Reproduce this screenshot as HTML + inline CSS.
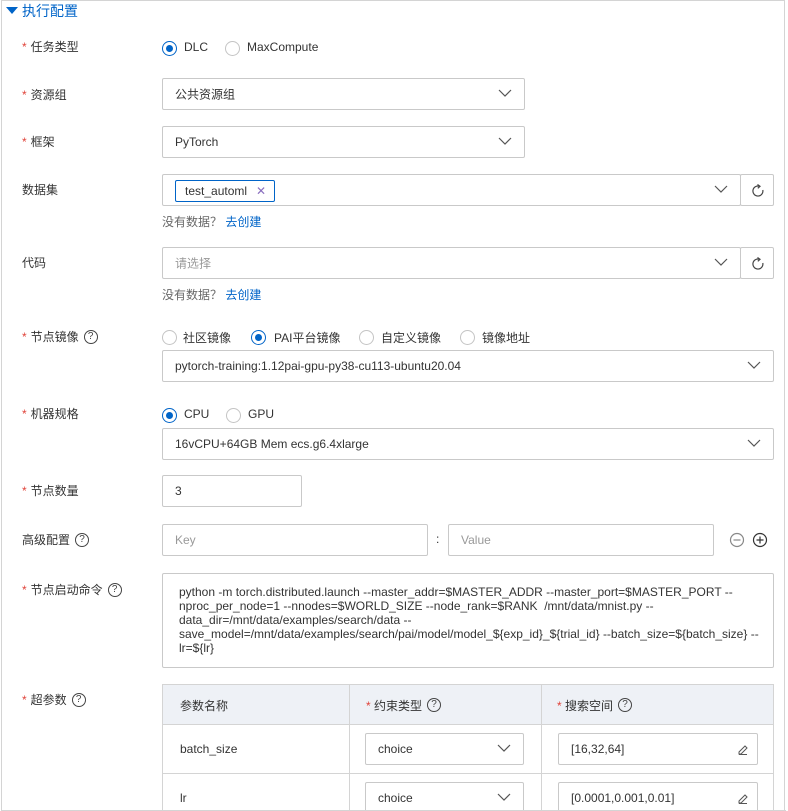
<!DOCTYPE html>
<html><head><meta charset="utf-8"><style>
*{box-sizing:border-box;margin:0;padding:0}
body{width:788px;height:811px;background:#fff;position:relative;overflow:hidden;font-family:"Liberation Sans","Noto Sans CJK SC",sans-serif;font-size:12px;color:#333}
.a{position:absolute;white-space:nowrap}
.frame{position:absolute;left:1px;top:0;width:784px;height:811px;border:1px solid #d4d4d4}
.lbl{position:absolute;left:22px;line-height:16px}
.lbl i{font-style:normal;color:#e0433a;margin-right:4px}
.box{position:absolute;border:1px solid #c9c9c9;border-radius:2px;background:#fff}
.tx{position:absolute;left:12px;top:50%;transform:translateY(-50%);white-space:nowrap}
.ph{color:#999}
.rad{position:absolute;width:15px;height:15px;border:1px solid #c4c4c4;border-radius:50%;background:#fff}
.rad.on{border-color:#0064c8}
.rad.on:after{content:"";position:absolute;left:3px;top:3px;width:7px;height:7px;border-radius:50%;background:#0064c8}
.q{display:inline-block;width:14px;height:14px;border:1.2px solid #444;border-radius:50%;font-size:10px;line-height:12px;text-align:center;color:#444;vertical-align:top;margin-top:1px;margin-left:5px}
.arrow{position:absolute;right:12px;top:50%;margin-top:-6px;width:14px;height:10px}
.link{color:#0064c8}
.hint{color:#666}
</style></head><body>
<div class="frame"></div>
<svg class="a" style="left:5px;top:5px" width="14" height="10"><path d="M1 2 L13 2 L7 9Z" fill="#0064c8"/></svg>
<div class="a" style="left:22px;top:2px;font-size:14px;color:#0064c8;line-height:18px">执行配置</div>

<div class="lbl" style="top:39px"><i>*</i>任务类型</div>
<div class="rad on" style="left:162px;top:41px"></div><div class="a" style="left:184px;top:40px">DLC</div>
<div class="rad" style="left:225px;top:41px"></div><div class="a" style="left:247px;top:40px">MaxCompute</div>

<div class="lbl" style="top:87px"><i>*</i>资源组</div>
<div class="box" style="left:162px;top:78px;width:363px;height:32px"><span class="tx">公共资源组</span><svg class="arrow" viewBox="0 0 14 10"><path d="M1 2 L7 8 L13 2" fill="none" stroke="#555" stroke-width="1.2"/></svg></div>

<div class="lbl" style="top:134px"><i>*</i>框架</div>
<div class="box" style="left:162px;top:126px;width:363px;height:32px"><span class="tx">PyTorch</span><svg class="arrow" viewBox="0 0 14 10"><path d="M1 2 L7 8 L13 2" fill="none" stroke="#555" stroke-width="1.2"/></svg></div>

<div class="lbl" style="top:182px">数据集</div>
<div class="box" style="left:162px;top:174px;width:579px;height:32px"><div class="a" style="left:12px;top:5px;width:100px;height:22px;border:1px solid #0064c8;border-radius:2px;line-height:20px;padding-left:9px">test_automl<span style="position:absolute;left:80px;color:#8a6fbf">✕</span></div><svg class="arrow" viewBox="0 0 14 10"><path d="M1 2 L7 8 L13 2" fill="none" stroke="#555" stroke-width="1.2"/></svg></div>
<div class="box" style="left:740px;top:174px;width:34px;height:32px"><svg class="a" style="left:10px;top:9px" width="14" height="14" viewBox="0 0 14 14"><path d="M8.5 2.3 A5 5 0 1 0 11.8 6" fill="none" stroke="#444" stroke-width="1.2"/><path d="M6.5 0.5 L9 2.3 L6.8 4.3" fill="none" stroke="#444" stroke-width="1.2"/></svg></div>
<div class="a hint" style="left:162px;top:213px">没有数据？ <span class="link">去创建</span></div>

<div class="lbl" style="top:255px">代码</div>
<div class="box" style="left:162px;top:247px;width:579px;height:32px"><span class="tx ph">请选择</span><svg class="arrow" viewBox="0 0 14 10"><path d="M1 2 L7 8 L13 2" fill="none" stroke="#555" stroke-width="1.2"/></svg></div>
<div class="box" style="left:740px;top:247px;width:34px;height:32px"><svg class="a" style="left:10px;top:9px" width="14" height="14" viewBox="0 0 14 14"><path d="M8.5 2.3 A5 5 0 1 0 11.8 6" fill="none" stroke="#444" stroke-width="1.2"/><path d="M6.5 0.5 L9 2.3 L6.8 4.3" fill="none" stroke="#444" stroke-width="1.2"/></svg></div>
<div class="a hint" style="left:162px;top:286px">没有数据？ <span class="link">去创建</span></div>

<div class="lbl" style="top:329px"><i>*</i>节点镜像<span class="q">?</span></div>
<div class="rad" style="left:162px;top:330px"></div><div class="a" style="left:183px;top:329px">社区镜像</div>
<div class="rad on" style="left:251px;top:330px"></div><div class="a" style="left:274px;top:329px">PAI平台镜像</div>
<div class="rad" style="left:359px;top:330px"></div><div class="a" style="left:381px;top:329px">自定义镜像</div>
<div class="rad" style="left:460px;top:330px"></div><div class="a" style="left:482px;top:329px">镜像地址</div>
<div class="box" style="left:162px;top:350px;width:612px;height:32px"><span class="tx">pytorch-training:1.12pai-gpu-py38-cu113-ubuntu20.04</span><svg class="arrow" viewBox="0 0 14 10"><path d="M1 2 L7 8 L13 2" fill="none" stroke="#555" stroke-width="1.2"/></svg></div>

<div class="lbl" style="top:406px"><i>*</i>机器规格</div>
<div class="rad on" style="left:162px;top:408px"></div><div class="a" style="left:184px;top:407px">CPU</div>
<div class="rad" style="left:226px;top:408px"></div><div class="a" style="left:248px;top:407px">GPU</div>
<div class="box" style="left:162px;top:428px;width:612px;height:32px"><span class="tx">16vCPU+64GB Mem ecs.g6.4xlarge</span><svg class="arrow" viewBox="0 0 14 10"><path d="M1 2 L7 8 L13 2" fill="none" stroke="#555" stroke-width="1.2"/></svg></div>

<div class="lbl" style="top:483px"><i>*</i>节点数量</div>
<div class="box" style="left:162px;top:475px;width:140px;height:32px"><span class="tx">3</span></div>

<div class="lbl" style="top:532px">高级配置<span class="q">?</span></div>
<div class="box" style="left:162px;top:524px;width:266px;height:32px"><span class="tx ph">Key</span></div>
<div class="a" style="left:436px;top:532px">:</div>
<div class="box" style="left:448px;top:524px;width:266px;height:32px"><span class="tx ph">Value</span></div>
<svg class="a" style="left:729px;top:532px" width="16" height="16"><circle cx="8" cy="8" r="6.5" fill="none" stroke="#888" stroke-width="1.2"/><path d="M4.5 8H11.5" stroke="#888" stroke-width="1.2"/></svg>
<svg class="a" style="left:752px;top:532px" width="16" height="16"><circle cx="8" cy="8" r="6.5" fill="none" stroke="#333" stroke-width="1.2"/><path d="M4.5 8H11.5M8 4.5V11.5" stroke="#333" stroke-width="1.2"/></svg>

<div class="lbl" style="top:582px"><i>*</i>节点启动命令<span class="q">?</span></div>
<div class="box" style="left:162px;top:573px;width:612px;height:95px"><div class="a" style="left:16px;top:11px;line-height:14px;white-space:normal;width:590px">python -m torch.distributed.launch --master_addr=$MASTER_ADDR --master_port=$MASTER_PORT --<br>nproc_per_node=1 --nnodes=$WORLD_SIZE --node_rank=$RANK &nbsp;/mnt/data/mnist.py --<br>data_dir=/mnt/data/examples/search/data --<br>save_model=/mnt/data/examples/search/pai/model/model_${exp_id}_${trial_id} --batch_size=${batch_size} --<br>lr=${lr}</div></div>

<div class="lbl" style="top:692px"><i>*</i>超参数<span class="q">?</span></div>
<div class="a" style="left:162px;top:684px;width:612px;height:126px;border:1px solid #d4d4d4;border-bottom:none;overflow:hidden">
 <div class="a" style="left:0;top:0;width:610px;height:40px;background:#eef1f6;border-bottom:1px solid #d4d4d4"></div>
 <div class="a" style="left:186px;top:0;width:1px;height:130px;background:#d4d4d4"></div>
 <div class="a" style="left:378px;top:0;width:1px;height:130px;background:#d4d4d4"></div>
 <div class="a" style="left:0;top:88px;width:610px;height:1px;background:#d4d4d4"></div>
 <div class="a" style="left:17px;top:12px">参数名称</div>
 <div class="a" style="left:203px;top:12px"><span style="color:#e0433a">* </span>约束类型<span class="q">?</span></div>
 <div class="a" style="left:394px;top:12px"><span style="color:#e0433a">* </span>搜索空间<span class="q">?</span></div>
 <div class="a" style="left:17px;top:57px">batch_size</div>
 <div class="a" style="left:17px;top:106px">lr</div>
 <div class="box" style="left:202px;top:48px;width:159px;height:32px"><span class="tx">choice</span><svg class="arrow" viewBox="0 0 14 10"><path d="M1 2 L7 8 L13 2" fill="none" stroke="#555" stroke-width="1.2"/></svg></div>
 <div class="box" style="left:202px;top:97px;width:159px;height:32px"><span class="tx">choice</span><svg class="arrow" viewBox="0 0 14 10"><path d="M1 2 L7 8 L13 2" fill="none" stroke="#555" stroke-width="1.2"/></svg></div>
 <div class="box" style="left:395px;top:48px;width:200px;height:32px"><span class="tx">[16,32,64]</span><svg class="a" style="right:9px;top:10px" width="10" height="11"><path d="M1 8 L7 2 L9 4 L3 10 H1Z M1 10.5 H9" fill="none" stroke="#555" stroke-width="1"/></svg></div>
 <div class="box" style="left:395px;top:97px;width:200px;height:32px"><span class="tx">[0.0001,0.001,0.01]</span><svg class="a" style="right:9px;top:10px" width="10" height="11"><path d="M1 8 L7 2 L9 4 L3 10 H1Z M1 10.5 H9" fill="none" stroke="#555" stroke-width="1"/></svg></div>
</div>
<div class="a" style="left:1px;top:810px;width:785px;height:1px;background:#d4d4d4"></div>
</body></html>
